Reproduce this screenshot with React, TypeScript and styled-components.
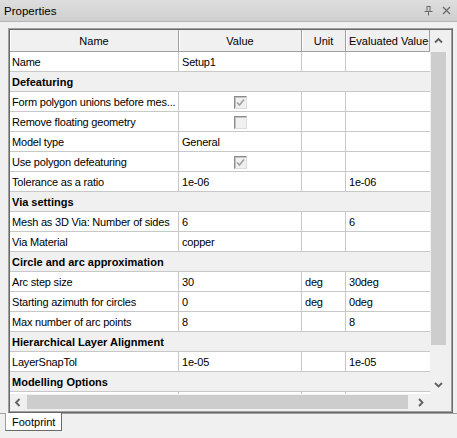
import React from 'react';
import styled, { createGlobalStyle } from 'styled-components';

const Global = createGlobalStyle`
  html, body { margin: 0; padding: 0; background: #f0f0f0; }
  body { font-family: "Liberation Sans", Arial, sans-serif; font-size: 11px; color: #000; }
  * { box-sizing: border-box; }
`;

const Panel = styled.div`
  width: 457px;
  height: 438px;
  display: flex;
  flex-direction: column;
  background: #f0f0f0;
  overflow: hidden;
`;

const TitleBar = styled.div`
  height: 22px;
  flex: none;
  display: flex;
  align-items: center;
  padding: 0 6px 0 4px;
  background: linear-gradient(#dedede, #cfcfcf);
  border-bottom: 1px solid #b4b4b4;
`;

const Title = styled.span`
  flex: 1;
  font-size: 11.5px;
  color: #000;
`;

const TitleIcons = styled.div`
  display: flex;
  gap: 9px;
  align-items: center;
`;

const Frame = styled.div`
  margin: 6px 4px 0 8px;
  height: 385px;
  flex: none;
  border: 1px solid #a0a0a0;
  border-right-color: #696969;
  border-bottom-color: #696969;
  padding: 1px 4px 1px 1px;
  box-shadow: inset 1px 1px 0 #696969, inset -1px -1px 0 #a0a0a0;
  display: grid;
  grid-template-columns: 420px 17px;
  grid-template-rows: 364px 17px;
`;

const TableArea = styled.div`
  overflow: hidden;
  background: #f0f0f0;
  letter-spacing: -0.2px;
`;

const COLS = '169px 123px 44px 84px';

const HeaderRow = styled.div`
  display: grid;
  grid-template-columns: ${COLS};
  height: 22px;
  border-bottom: 1px solid #a0a0a0;
  letter-spacing: 0;
`;

const HeaderCell = styled.div<{ $left?: boolean }>`
  display: flex;
  align-items: center;
  white-space: nowrap;
  overflow: hidden;
  background: #f0f0f0;
  border-right: 1px solid #a0a0a0;
  box-shadow: inset 1px 0 0 #fff;
  padding-left: ${(p) => (p.$left ? '3px' : '0')};
  justify-content: ${(p) => (p.$left ? 'flex-start' : 'center')};
`;

const DataRow = styled.div`
  display: grid;
  grid-template-columns: ${COLS};
  height: 20px;
  background: #fff;
  border-bottom: 1px solid #c8c8c8;
`;

const Cell = styled.div<{ $pad?: number; $center?: boolean; $last?: boolean }>`
  display: flex;
  align-items: center;
  justify-content: ${(p) => (p.$center ? 'center' : 'flex-start')};
  padding-left: ${(p) => (p.$center ? 0 : p.$pad ?? 3)}px;
  white-space: nowrap;
  overflow: hidden;
  border-right: ${(p) => (p.$last ? 'none' : '1px solid #c8c8c8')};
`;

const CategoryRow = styled.div`
  height: 20px;
  display: flex;
  align-items: center;
  padding-left: 2px;
  background: #f0f0f0;
  border-bottom: 1px solid #c8c8c8;
  font-weight: bold;
  white-space: nowrap;
  letter-spacing: 0;
`;

const Check = styled.div`
  width: 13px;
  height: 13px;
  margin-top: 1px;
  border: 1px solid;
  border-color: #8a8a8a #dcdcdc #dcdcdc #8a8a8a;
  box-shadow: inset 1px 1px 0 #c4c4c4;
  background: #f0f0f0;
  display: flex;
  align-items: center;
  justify-content: center;
`;

const VScroll = styled.div`
  display: flex;
  flex-direction: column;
  background: #f0f0f0;
`;

const HScroll = styled.div`
  display: flex;
  background: #f0f0f0;
`;

const ArrowBtn = styled.div<{ $w?: number; $h?: number }>`
  flex: none;
  width: ${(p) => (p.$w ? `${p.$w}px` : '100%')};
  height: ${(p) => (p.$h ? `${p.$h}px` : '100%')};
  display: flex;
  align-items: center;
  justify-content: center;
`;

const VTrack = styled.div`
  flex: 1;
  display: flex;
  flex-direction: column;
`;

const VThumb = styled.div`
  height: 293px;
  margin: 0 1px;
  background: #cdcdcd;
`;

const HTrack = styled.div`
  flex: 1;
  display: flex;
  align-items: stretch;
  padding: 1px 0 2px;
`;

const HThumb = styled.div`
  width: 381px;
  background: #cdcdcd;
`;

const Corner = styled.div`
  background: #f0f0f0;
`;

const TabStrip = styled.div`
  display: flex;
  height: 18px;
  flex: none;
`;

const TabLead = styled.div`
  width: 5px;
  border-top: 1px solid #a0a0a0;
`;

const Tab = styled.div`
  width: 57px;
  height: 18px;
  background: #fff;
  border-left: 1px solid #a0a0a0;
  border-right: 1px solid #696969;
  border-bottom: 1px solid #696969;
  padding-left: 6px;
  display: flex;
  align-items: center;
  font-size: 11px;
`;

const TabRest = styled.div`
  flex: 1;
  border-top: 1px solid #a0a0a0;
`;

const Chevron = ({ dir }: { dir: 'up' | 'down' | 'left' | 'right' }) => {
  const d = {
    up: 'M1 5.5 L4.5 2 L8 5.5',
    down: 'M1 2 L4.5 5.5 L8 2',
    left: 'M5.5 1 L2 4.5 L5.5 8',
    right: 'M2 1 L5.5 4.5 L2 8',
  }[dir];
  return (
    <svg width="9" height="9" viewBox="0 0 9 9">
      <path d={d} fill="none" stroke="#606060" strokeWidth="1.8" />
    </svg>
  );
};

const CheckMark = () => (
  <svg width="9" height="9" viewBox="0 0 9 9">
    <path d="M1 4.5 L3.5 7 L8 1.5" fill="none" stroke="#a0a0a0" strokeWidth="1.6" />
  </svg>
);

type Row =
  | { cat: string }
  | { name: string; value?: string; check?: boolean; unit?: string; ev?: string };

const rows: Row[] = [
  { name: 'Name', value: 'Setup1' },
  { cat: 'Defeaturing' },
  { name: 'Form polygon unions before mes...', check: true },
  { name: 'Remove floating geometry', check: false },
  { name: 'Model type', value: 'General' },
  { name: 'Use polygon defeaturing', check: true },
  { name: 'Tolerance as a ratio', value: '1e-06', ev: '1e-06' },
  { cat: 'Via settings' },
  { name: 'Mesh as 3D Via: Number of sides', value: '6', ev: '6' },
  { name: 'Via Material', value: 'copper' },
  { cat: 'Circle and arc approximation' },
  { name: 'Arc step size', value: '30', unit: 'deg', ev: '30deg' },
  { name: 'Starting azimuth for circles', value: '0', unit: 'deg', ev: '0deg' },
  { name: 'Max number of arc points', value: '8', ev: '8' },
  { cat: 'Hierarchical Layer Alignment' },
  { name: 'LayerSnapTol', value: '1e-05', ev: '1e-05' },
  { cat: 'Modelling Options' },
  { name: '' },
];

export default function App() {
  return (
    <>
      <Global />
      <Panel>
        <TitleBar>
          <Title>Properties</Title>
          <TitleIcons>
            <svg width="9" height="10" viewBox="0 0 9 10">
              <path d="M2.5 0.5 H6.5 M3 0.5 V5.5 M6 0.5 V5.5 M0.5 5.5 H8.5 M4.5 5.5 V9.5" fill="none" stroke="#6a6a6a" strokeWidth="1" />
            </svg>
            <svg width="9" height="9" viewBox="0 0 9 9">
              <path d="M1 1 L8 8 M8 1 L1 8" fill="none" stroke="#6a6a6a" strokeWidth="1.3" />
            </svg>
          </TitleIcons>
        </TitleBar>
        <Frame>
          <TableArea>
            <HeaderRow>
              <HeaderCell>Name</HeaderCell>
              <HeaderCell>Value</HeaderCell>
              <HeaderCell>Unit</HeaderCell>
              <HeaderCell $left>Evaluated Value</HeaderCell>
            </HeaderRow>
            {rows.map((r, i) =>
              'cat' in r ? (
                <CategoryRow key={i}>{r.cat}</CategoryRow>
              ) : (
                <DataRow key={i}>
                  <Cell $pad={2}>{r.name}</Cell>
                  {r.check !== undefined ? (
                    <Cell $center>
                      <Check>{r.check && <CheckMark />}</Check>
                    </Cell>
                  ) : (
                    <Cell>{r.value}</Cell>
                  )}
                  <Cell>{r.unit}</Cell>
                  <Cell $last>{r.ev}</Cell>
                </DataRow>
              )
            )}
          </TableArea>
          <VScroll>
            <ArrowBtn $h={22}>
              <Chevron dir="up" />
            </ArrowBtn>
            <VTrack>
              <VThumb />
            </VTrack>
            <ArrowBtn $h={17}>
              <Chevron dir="down" />
            </ArrowBtn>
          </VScroll>
          <HScroll>
            <ArrowBtn $w={17}>
              <Chevron dir="left" />
            </ArrowBtn>
            <HTrack>
              <HThumb />
            </HTrack>
            <ArrowBtn $w={17}>
              <Chevron dir="right" />
            </ArrowBtn>
          </HScroll>
          <Corner />
        </Frame>
        <TabStrip>
          <TabLead />
          <Tab>Footprint</Tab>
          <TabRest />
        </TabStrip>
      </Panel>
    </>
  );
}
